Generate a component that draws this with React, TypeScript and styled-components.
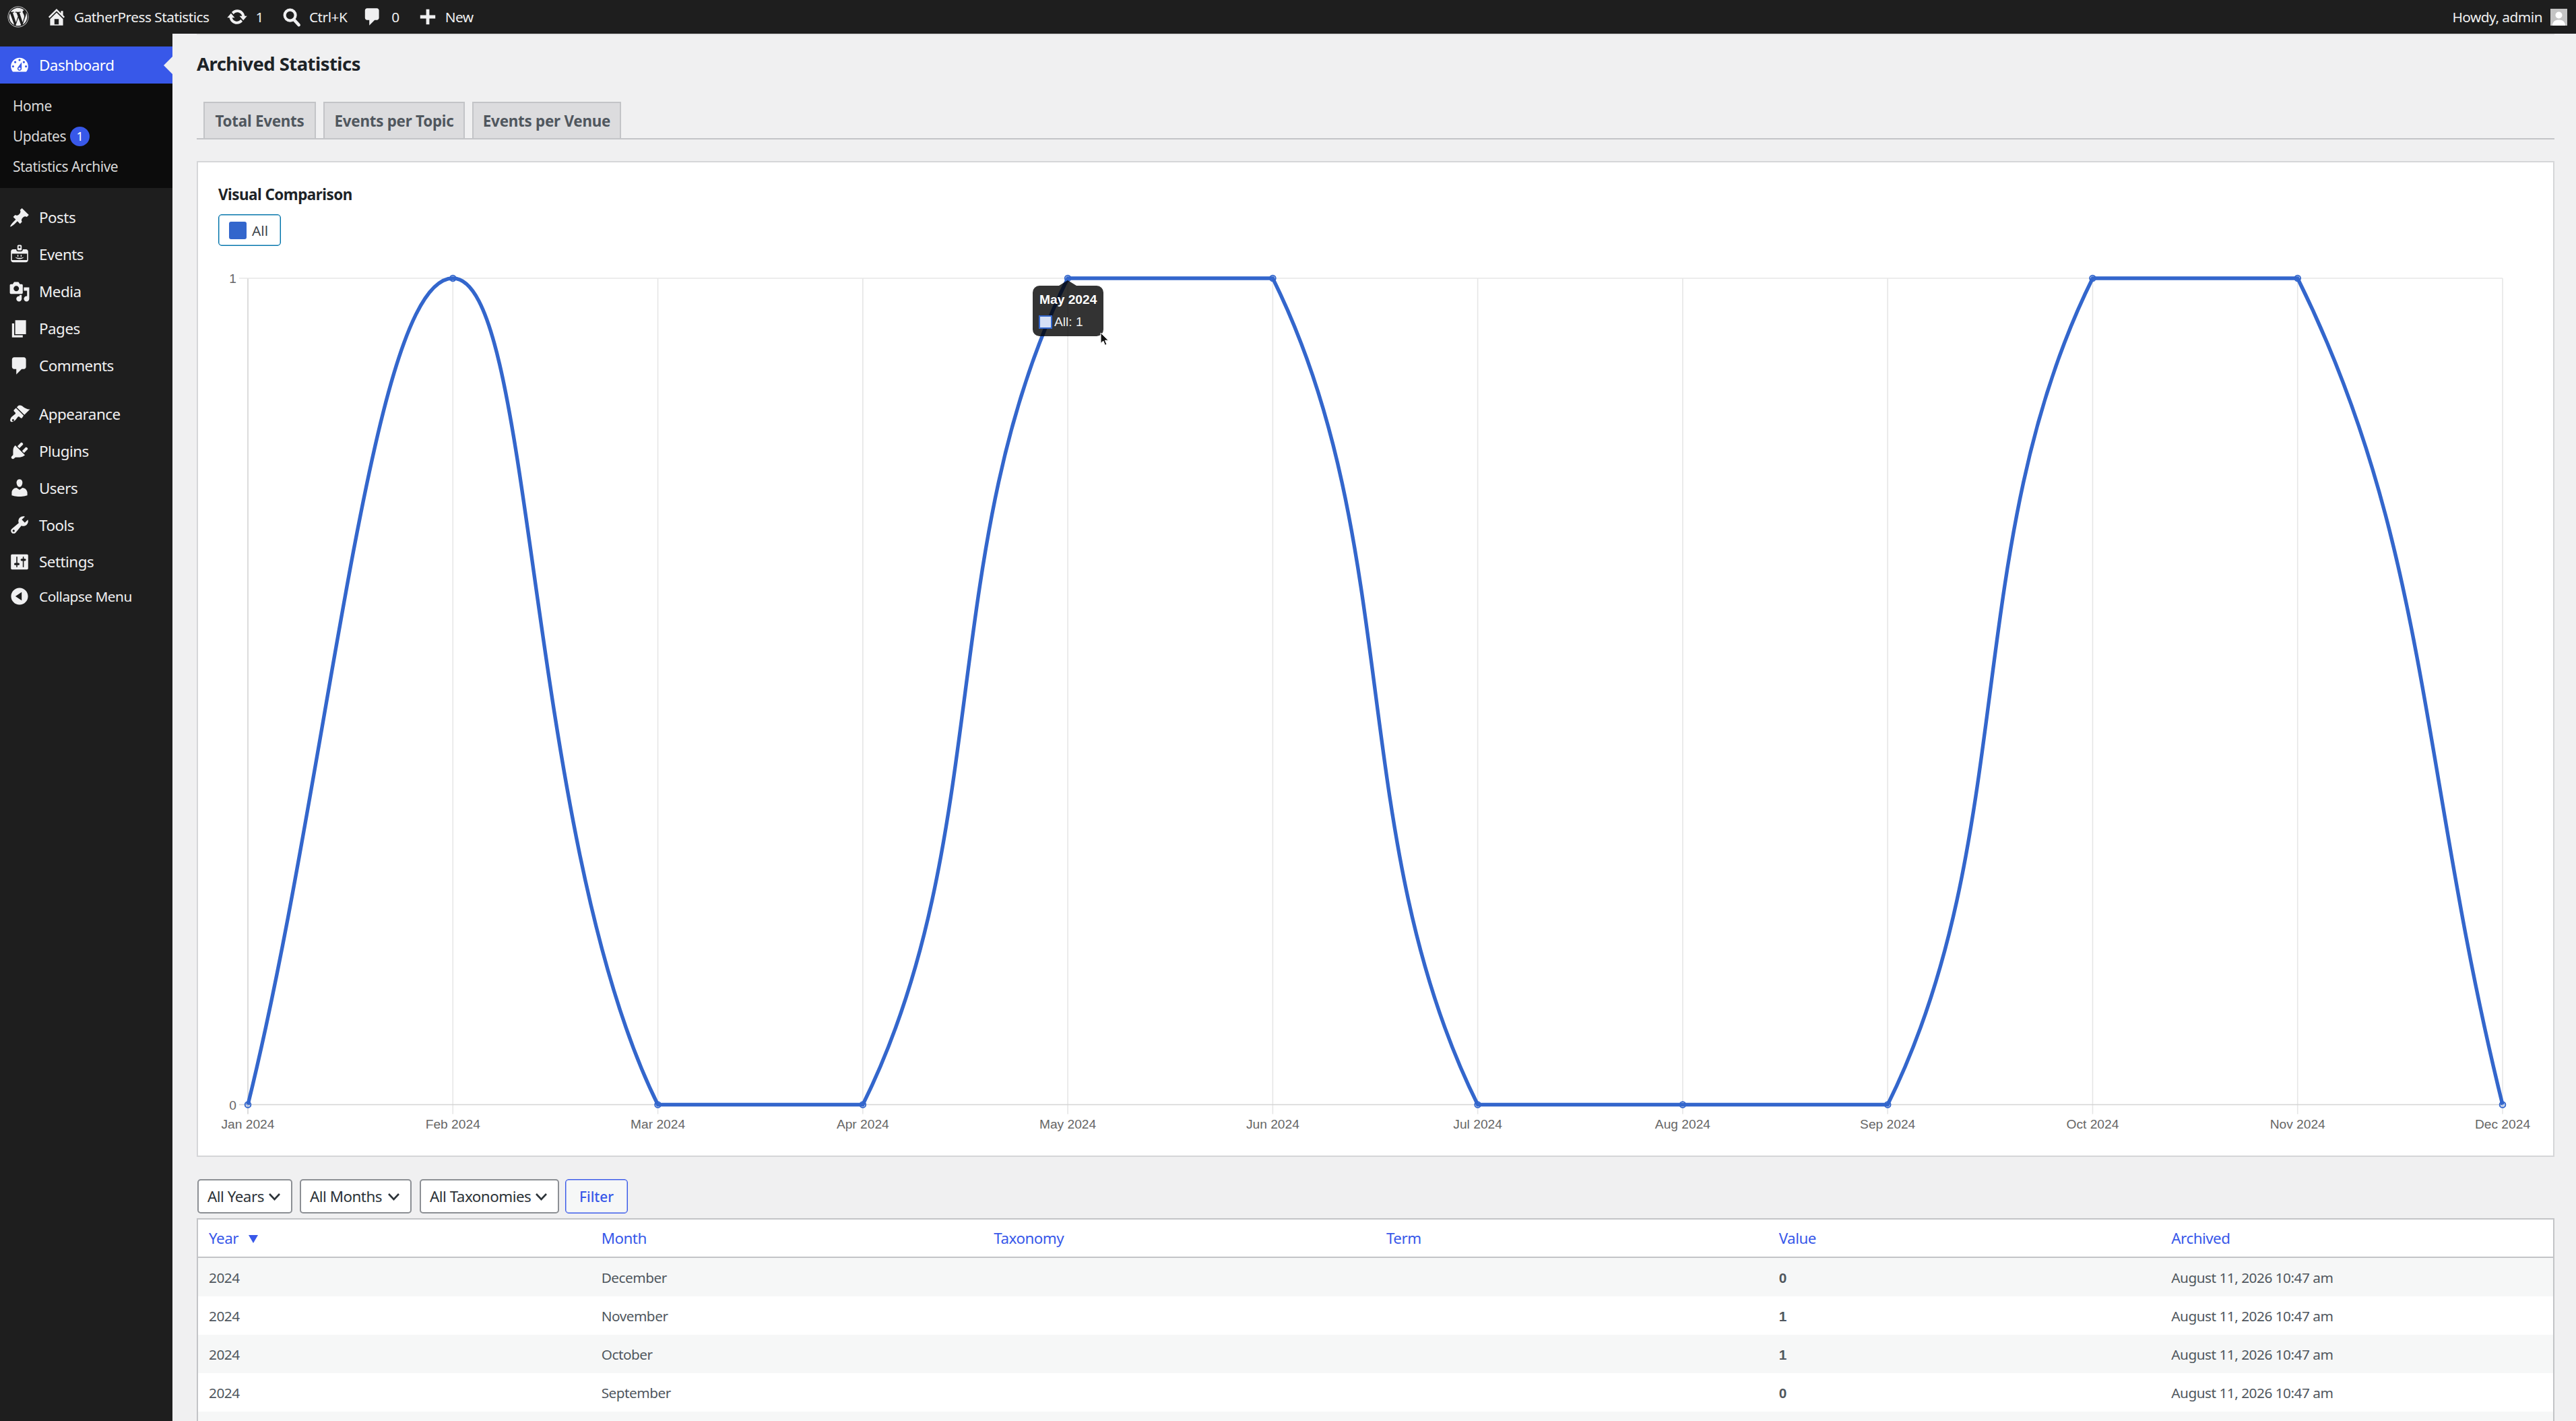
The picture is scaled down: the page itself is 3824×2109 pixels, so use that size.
import React from "react";
import styled, { createGlobalStyle } from "styled-components";
import { FaWordpress } from "react-icons/fa";

const UI = '"Noto Sans", "Open Sans", sans-serif';
const CHART = '"Liberation Sans", Arial, sans-serif';

const Global = createGlobalStyle`
  html, body { margin: 0; padding: 0; height: 100%; overflow: hidden; background: #f0f0f1; }
  #root { height: 100%; }
  * { box-sizing: border-box; }
`;

const Page = styled.div`
  display: flex; flex-direction: column; height: 2109px; overflow: hidden;
  font-family: ${UI}; font-size: 20.8px; letter-spacing: -0.5px; color: #50575e;
`;
const AdminBar = styled.header`
  display: flex; align-items: center; flex: 0 0 50px; height: 50px; background: #1e1e1e; color: #f0f0f1; padding: 0 13px 0 11px;
`;
const BarIcon = styled.svg<{ $ml?: number }>`
  width: 32px; height: 32px; flex: none; fill: #f0f0f1; margin-left: ${p => p.$ml ?? 0}px;
`;
const BarText = styled.span<{ $ml?: number }>`
  margin-left: ${p => p.$ml ?? 10}px; white-space: nowrap; line-height: 50px;
`;
const BarSpacer = styled.div`flex: 1;`;
const Avatar = styled.svg`
  width: 25px; height: 25px; margin-left: 12px; display: block;
`;
const Body = styled.div`display: flex; flex: 1; min-height: 0;`;
const Sidebar = styled.nav`
  flex: 0 0 256px; width: 256px; background: #1e1e1e; padding-top: 19px; color: #f0f0f1;
`;
const MenuRow = styled.div<{ $active?: boolean; $h?: number; $size?: number }>`
  position: relative; display: flex; align-items: center; height: ${p => p.$h ?? 54.9}px;
  font-size: ${p => p.$size ?? 22.4}px; background: ${p => p.$active ? "#3858e9" : "transparent"};
  color: ${p => p.$active ? "#fff" : "#f0f0f1"};
`;
const MenuIcon = styled.svg`
  width: 32px; height: 32px; margin-left: 13px; margin-right: 13px; flex: none; fill: currentColor;
`;
const CurrentArrow = styled.i`
  position: absolute; right: 0; top: 50%; margin-top: -13px;
  border: 13px solid transparent; border-left-width: 0; border-right: 13px solid #f0f0f1;
`;
const Submenu = styled.div`
  background: #0c0c0c; padding: 10.5px 0 9.5px 19px; margin-bottom: 16.5px;
`;
const SubRow = styled.div`
  display: flex; align-items: center; height: 45px; color: #d8d8d8; font-size: 21px;
`;
const Badge = styled.span`
  display: inline-flex; align-items: center; justify-content: center; width: 29px; height: 29px; margin-left: 6px;
  border-radius: 50%; background: #3858e9; color: #fff; font-size: 18px;
`;
const MenuGroup = styled.div`margin-bottom: 17px;`;
const Main = styled.main`
  flex: 1; min-width: 0; background: #f0f0f1; padding: 0 32px 0 36px;
`;
const TopRule = styled.div`height: 2px; background: #e2e2e3;`;
const Title = styled.h1`
  margin: 18px 0 0; height: 50px; line-height: 50px; font-size: 27.4px; font-weight: 700; color: #1d2327;
`;
const Tabs = styled.div`
  display: flex; gap: 11px; margin-top: 31px; height: 56px; padding-left: 10px; border-bottom: 2px solid #c3c4c7;
`;
const Tab = styled.div<{ $w: number }>`
  width: ${p => p.$w}px; height: 54px; display: flex; align-items: center; justify-content: center;
  background: #dcdcde; border: 2px solid #c3c4c7; border-bottom: 0; color: #50575e; font-size: 22.4px; font-weight: 700; letter-spacing: -0.25px; white-space: nowrap;
`;
const Panel = styled.section`
  margin-top: 32px; height: 1478px; background: #fff; border: 2px solid #d5d6d8; padding: 30px 30px 0;
`;
const PanelTitle = styled.h2`
  margin: 0; height: 36px; line-height: 36px; font-size: 22.4px; font-weight: 700; color: #1d2327;
`;
const LegendButton = styled.button`
  display: flex; align-items: center; gap: 8px; width: 93px; height: 47px; margin-top: 11px; padding: 0 0 0 15px;
  background: #fff; border: 1px solid #0073aa; box-shadow: inset 0 0 0 1px rgba(0, 115, 170, 0.45); border-radius: 5px;
  font: inherit; color: #3c434a; font-size: 20.8px;
`;
const Swatch = styled.i`
  width: 26px; height: 26px; border-radius: 3px; background: #3366cc; flex: none;
`;
const ChartWrap = styled.div`
  position: relative; margin-top: 27px; width: 3436px; height: 1320px;
`;
const ChartSvg = styled.svg`display: block; width: 3436px; height: 1320px;`;
const ChartLabel = styled.text`
  font-family: ${CHART}; font-size: 19.2px; letter-spacing: 0; fill: #666;
`;
const Tooltip = styled.div`
  position: absolute; left: 1209px; top: 32px; width: 105px; height: 75px; padding: 11px 10px;
  background: rgba(0, 0, 0, 0.8); border-radius: 10px; color: #fff; font-family: ${CHART}; letter-spacing: 0; font-size: 19.2px; white-space: nowrap;
  &::before {
    content: ""; position: absolute; left: 39px; top: -8px; border: 13px solid transparent; border-top: 0;
    border-bottom: 8px solid rgba(0, 0, 0, 0.8);
  }
`;
const TipTitle = styled.div`font-weight: 700; line-height: 20px;`;
const TipLine = styled.div`display: flex; align-items: center; gap: 3px; margin-top: 13px; line-height: 20px; color: #f0f0f0;`;
const TipSwatch = styled.i`
  width: 20px; height: 20px; background: #d6e0f5; border: 2px solid #3366cc; flex: none; margin-left: -1px;
`;
const Pointer = styled.svg`
  position: absolute; left: 1309px; top: 101px; width: 14px; height: 21px;
`;
const Filters = styled.form`
  display: flex; margin-top: 33px; height: 51px;
`;
const Select = styled.div<{ $w: number; $ml: number }>`
  display: flex; align-items: center; justify-content: space-between; width: ${p => p.$w}px; margin-left: ${p => p.$ml}px;
  padding: 0 15px 0 13px; background: #fff; border: 2px solid #8c8f94; border-radius: 5px; color: #2c3338; font-size: 22.4px; white-space: nowrap;
`;
const Chevron = styled.svg`width: 19px; height: 12px; flex: none;`;
const FilterButton = styled.button`
  width: 93px; margin-left: 9px; background: #f6f7f7; border: 1px solid #3858e9; box-shadow: inset 0 0 0 1px rgba(56, 88, 233, 0.45); border-radius: 5px; color: #3858e9;
  font: inherit; font-weight: 500; font-size: 20.8px;
`;
const Table = styled.table`
  display: table; width: 3500px; margin-top: 7px; table-layout: fixed; border-collapse: separate; border-spacing: 0;
  background: #fff; border: 2px solid #c3c4c7;
`;
const Th = styled.th`
  height: 57px; padding: 0 0 0 16px; text-align: left; font-weight: 400; color: #3858e9; font-size: 22.4px; border-bottom: 2px solid #c3c4c7;
`;
const SortArrow = styled.i`
  display: inline-block; margin-left: 15px; vertical-align: 1px; border: 7px solid transparent; border-top: 12px solid #3858e9; border-bottom: 0;
`;
const Row = styled.tr<{ $alt: boolean }>`background: ${p => p.$alt ? "#f6f7f7" : "#fff"};`;
const Td = styled.td`
  height: 57px; padding: 0 0 0 16px; font-size: 20.8px; color: #50575e; white-space: nowrap;
`;
const Value = styled.strong`font-family: ${CHART}; font-weight: 700; letter-spacing: 0;`;

/* --- chart geometry, in svg coordinates (page x - 324, page y - 392) --- */
const X0 = 44, XN = 3391, TOP = 21, BOT = 1247.5;
const VALUES = [0, 1, 0, 0, 1, 1, 0, 0, 0, 1, 1, 0];
const LABELS = ["Jan", "Feb", "Mar", "Apr", "May", "Jun", "Jul", "Aug", "Sep", "Oct", "Nov", "Dec"].map(m => `${m} 2024`);
const step = (XN - X0) / 11;
const PTS = VALUES.map((v, i) => ({ x: X0 + i * step, y: v ? TOP : BOT }));

function linePath(): string {
  const t = 0.4;
  const cap = (v: number, a: number, b: number) => Math.max(Math.min(v, b), a);
  const ctrl = PTS.map((c, i) => {
    const p = PTS[i - 1] ?? c;
    const n = PTS[i + 1] ?? c;
    const d01 = Math.hypot(c.x - p.x, c.y - p.y);
    const d12 = Math.hypot(n.x - c.x, n.y - c.y);
    const s = d01 + d12 || 1;
    const fa = (t * d01) / s, fb = (t * d12) / s;
    return {
      c1x: cap(c.x - fa * (n.x - p.x), X0, XN), c1y: cap(c.y - fa * (n.y - p.y), TOP, BOT),
      c2x: cap(c.x + fb * (n.x - p.x), X0, XN), c2y: cap(c.y + fb * (n.y - p.y), TOP, BOT),
    };
  });
  let d = `M${PTS[0].x} ${PTS[0].y}`;
  for (let i = 1; i < PTS.length; i++) {
    d += `C${ctrl[i - 1].c2x} ${ctrl[i - 1].c2y} ${ctrl[i].c1x} ${ctrl[i].c1y} ${PTS[i].x} ${PTS[i].y}`;
  }
  return d;
}

const ICONS = {
  home: "M16 8.5l1.53 1.53-1.06 1.06L10 4.62l-6.47 6.47-1.06-1.06L10 2.5l4 4v-2h2v4zm-6-2.46l6 5.99V18H4v-5.97zM12 17v-5H8v5h4z",
  update: "M10.2 3.28c3.53 0 6.43 2.61 6.92 6h2.08l-3.5 4-3.5-4h2.32c-.45-1.97-2.21-3.44-4.32-3.44-1.45 0-2.73.71-3.54 1.78L4.95 5.66C6.23 4.2 8.11 3.28 10.2 3.28zm-.4 13.44c-3.52 0-6.43-2.61-6.92-6H.8l3.5-4c1.17 1.33 2.33 2.67 3.5 4H5.48c.45 1.97 2.21 3.44 4.32 3.44 1.45 0 2.73-.71 3.54-1.78l1.71 1.95c-1.28 1.46-3.15 2.39-5.25 2.39z",
  comment: "M5 2h9c1.1 0 2 .9 2 2v7c0 1.1-.9 2-2 2h-2l-5 5v-5H5c-1.1 0-2-.9-2-2V4c0-1.1.9-2 2-2z",
  plus: "M17 8.5v3h-5.5V17h-3v-5.5H3v-3h5.5V3h3v5.5z",
  dashboard: "M3.76 16h12.48c1.1-1.37 1.76-3.11 1.76-5 0-4.42-3.58-8-8-8s-8 3.58-8 8c0 1.89.66 3.63 1.76 5zM10 4c.55 0 1 .45 1 1s-.45 1-1 1-1-.45-1-1 .45-1 1-1zM6 6c.55 0 1 .45 1 1s-.45 1-1 1-1-.45-1-1 .45-1 1-1zm8 0c.55 0 1 .45 1 1s-.45 1-1 1-1-.45-1-1 .45-1 1-1zm-5.37 5.55L12 7v6c0 1.1-.9 2-2 2s-2-.9-2-2c0-.57.24-1.08.63-1.45zM4 10c.55 0 1 .45 1 1s-.45 1-1 1-1-.45-1-1 .45-1 1-1zm12 0c.55 0 1 .45 1 1s-.45 1-1 1-1-.45-1-1 .45-1 1-1zm-5 3c0-.55-.45-1-1-1s-1 .45-1 1 .45 1 1 1 1-.45 1-1z",
  posts: "M10.44 3.02l1.82-1.82 6.36 6.35-1.83 1.82c-1.05-.68-2.48-.57-3.41.36l-.75.75c-.92.93-1.04 2.35-.35 3.41l-1.83 1.82-2.41-2.41-2.8 2.79c-.42.42-3.38 2.71-3.8 2.29s1.86-3.39 2.28-3.81l2.79-2.79L4.1 9.36l1.83-1.82c1.05.69 2.48.57 3.4-.36l.75-.75c.93-.92 1.05-2.35.36-3.41z",
  events: "M12 5V2c0-.55-.45-1-1-1H9c-.55 0-1 .45-1 1v3c0 .55.45 1 1 1h2c.55 0 1-.45 1-1zm-2-3c.55 0 1 .45 1 1s-.45 1-1 1-1-.45-1-1 .45-1 1-1zm8 13V7c0-1.1-.9-2-2-2h-3v.33C13 6.25 12.25 7 11.33 7H8.67C7.75 7 7 6.25 7 5.33V5H4c-1.1 0-2 .9-2 2v8c0 1.1.9 2 2 2h12c1.1 0 2-.9 2-2zm-1-6v6H3V9h14zm-8 2c0-.55-.22-1-.5-1s-.5.45-.5 1 .22 1 .5 1 .5-.45.5-1zm3 0c0-.55-.22-1-.5-1s-.5.45-.5 1 .22 1 .5 1 .5-.45.5-1zm-5.96 1.21c.92.48 2.34.79 3.96.79s3.04-.31 3.96-.79c-.21 1-1.89 1.79-3.96 1.79s-3.75-.79-3.96-1.79z",
  media: "M13 11V4c0-.55-.45-1-1-1h-1.67L9 1H5L3.67 3H2c-.55 0-1 .45-1 1v7c0 .55.45 1 1 1h10c.55 0 1-.45 1-1zM7 4.5c1.38 0 2.5 1.12 2.5 2.5S8.38 9.5 7 9.5 4.5 8.38 4.5 7 5.62 4.5 7 4.5zM14 6h5v10.5c0 1.38-1.12 2.5-2.5 2.5S14 17.88 14 16.5s1.12-2.5 2.5-2.5c.17 0 .34.02.5.05V9h-3V6zm-4 8.05V13h2v3.5c0 1.38-1.12 2.5-2.5 2.5S7 17.88 7 16.5 8.12 14 9.5 14c.17 0 .34.02.5.05z",
  pages: "M6 15V2h10v13H6zm-1 1h8v2H3V5h2v11z",
  comments: "M5 2h9c1.1 0 2 .9 2 2v7c0 1.1-.9 2-2 2h-2l-5 5v-5H5c-1.1 0-2-.9-2-2V4c0-1.1.9-2 2-2z",
  appearance: "M14.48 11.06L7.41 3.99l1.5-1.5c.5-.56 2.3-.47 3.51.32 1.21.8 1.43 1.28 2.91 2.1 1.18.64 2.45 1.26 4.45.85zm-.71.71L6.7 4.7 4.93 6.47c-.39.39-.39 1.02 0 1.41l1.06 1.06c.39.39.39 1.03 0 1.42-.6.6-1.43 1.11-2.21 1.69-.35.26-.7.53-1.01.84-.95.95-2.05 3.31-1.01 4.34s3.23-.16 4.19-1.11c.31-.31.58-.66.84-1.01.58-.78 1.09-1.61 1.69-2.21.39-.39 1.03-.39 1.42 0l1.06 1.06c.39.39 1.02.39 1.41 0zM3.3 16.7a.95.95 0 1 1 1.35-1.35.95.95 0 0 1-1.35 1.35z",
  plugins: "M13.11 4.36L9.87 7.6 8 5.73l3.24-3.24c.35-.34 1.05-.2 1.56.32.52.51.66 1.21.31 1.55zm-8 1.77l.91-1.12 9.01 9.01-1.19.84c-.71.71-2.63 1.16-3.82 1.16H6.14L4.9 17.26c-.59.59-1.54.59-2.12 0-.59-.58-.59-1.53 0-2.12l1.24-1.24v-3.88c0-1.13.4-3.19 1.09-3.89zm7.26 3.97l3.24-3.24c.34-.35 1.04-.21 1.55.31.52.51.66 1.21.31 1.55l-3.24 3.25z",
  users: "M10 9.25c-2.27 0-2.73-3.44-2.73-3.44C7 4.02 7.82 2 9.97 2c2.16 0 2.98 2.02 2.71 3.81 0 0-.41 3.44-2.68 3.44zm0 2.57L12.72 10c2.39 0 4.52 2.33 4.52 4.53v2.49s-3.65 1.13-7.24 1.13c-3.65 0-7.24-1.13-7.24-1.13v-2.49c0-2.25 1.94-4.48 4.47-4.48z",
  tools: "M16.68 9.77c-1.34 1.34-3.3 1.67-4.95.99l-5.41 6.52c-.99.99-2.59.99-3.58 0s-.99-2.59 0-3.57l6.52-5.42c-.68-1.65-.35-3.61.99-4.95 1.28-1.28 3.12-1.62 4.72-1.06l-2.89 2.89 2.82 2.82 2.86-2.87c.53 1.58.18 3.39-1.08 4.65zM3.81 16.21c.4.39 1.04.39 1.43 0 .4-.4.4-1.04 0-1.43-.39-.4-1.03-.4-1.43 0-.39.39-.39 1.03 0 1.43z",
  settings: "M18 16V4c0-.55-.45-1-1-1H3c-.55 0-1 .45-1 1v12c0 .55.45 1 1 1h14c.55 0 1-.45 1-1zM8 11h1c.55 0 1 .45 1 1s-.45 1-1 1H8v1.5c0 .28-.22.5-.5.5s-.5-.22-.5-.5V13H6c-.55 0-1-.45-1-1s.45-1 1-1h1V5.5c0-.28.22-.5.5-.5s.5.22.5.5V11zm5-2h-1c-.55 0-1-.45-1-1s.45-1 1-1h1V5.5c0-.28.22-.5.5-.5s.5.22.5.5V7h1c.55 0 1 .45 1 1s-.45 1-1 1h-1v5.5c0 .28-.22.5-.5.5s-.5-.22-.5-.5V9z",
  collapse: "M10 2.16c4.33 0 7.84 3.51 7.84 7.84s-3.51 7.84-7.84 7.84S2.16 14.33 2.16 10 5.71 2.16 10 2.16zm2 11.72V6.12L6.18 9.97z",
};

function SideIcon({ name }: { name: keyof typeof ICONS }) {
  return <MenuIcon viewBox="0 0 20 20"><path d={ICONS[name]} /></MenuIcon>;
}

const MONTHS = ["December", "November", "October", "September"];
const ROW_VALUES = [0, 1, 1, 0];
const HEADERS = ["Month", "Taxonomy", "Term", "Value", "Archived"];

export default function App() {
  return (
    <Page>
      <Global />
      <AdminBar>
        <FaWordpress size={32} color="#f0f0f1" />
        <BarIcon viewBox="0 0 20 20" $ml={25}><path d={ICONS.home} /></BarIcon>
        <BarText>GatherPress Statistics</BarText>
        <BarIcon viewBox="0 0 20 20" $ml={25}><path d={ICONS.update} /></BarIcon>
        <BarText $ml={12}>1</BarText>
        <BarIcon viewBox="0 0 20 20" $ml={26}>
          <circle cx="8.5" cy="8.5" r="5" fill="none" stroke="#f0f0f1" strokeWidth="2.6" />
          <path d="M12 12.5l4.6 5" fill="none" stroke="#f0f0f1" strokeWidth="3" strokeLinecap="round" />
        </BarIcon>
        <BarText>Ctrl+K</BarText>
        <BarIcon viewBox="0 0 20 20" $ml={22}><path d={ICONS.comment} /></BarIcon>
        <BarText $ml={12}>0</BarText>
        <BarIcon viewBox="0 0 20 20" $ml={26}><path d={ICONS.plus} /></BarIcon>
        <BarText>New</BarText>
        <BarSpacer />
        <BarText>Howdy, admin</BarText>
        <Avatar viewBox="0 0 25 25">
          <rect width="25" height="25" fill="#c4c4c4" />
          <circle cx="12.5" cy="9.5" r="5" fill="#fff" />
          <path d="M3 25c0-6 4-8.5 9.5-8.5S22 19 22 25z" fill="#fff" />
        </Avatar>
      </AdminBar>
      <Body>
        <Sidebar>
          <MenuRow $active $h={55}>
            <SideIcon name="dashboard" />Dashboard<CurrentArrow />
          </MenuRow>
          <Submenu>
            <SubRow>Home</SubRow>
            <SubRow>Updates<Badge>1</Badge></SubRow>
            <SubRow>Statistics Archive</SubRow>
          </Submenu>
          <MenuGroup>
            <MenuRow><SideIcon name="posts" />Posts</MenuRow>
            <MenuRow><SideIcon name="events" />Events</MenuRow>
            <MenuRow><SideIcon name="media" />Media</MenuRow>
            <MenuRow><SideIcon name="pages" />Pages</MenuRow>
            <MenuRow><SideIcon name="comments" />Comments</MenuRow>
          </MenuGroup>
          <div>
            <MenuRow><SideIcon name="appearance" />Appearance</MenuRow>
            <MenuRow><SideIcon name="plugins" />Plugins</MenuRow>
            <MenuRow><SideIcon name="users" />Users</MenuRow>
            <MenuRow><SideIcon name="tools" />Tools</MenuRow>
            <MenuRow><SideIcon name="settings" />Settings</MenuRow>
            <MenuRow $h={47} $size={20.8}><SideIcon name="collapse" />Collapse Menu</MenuRow>
          </div>
        </Sidebar>
        <Main>
          <TopRule />
          <Title>Archived Statistics</Title>
          <Tabs>
            <Tab $w={167}>Total Events</Tab>
            <Tab $w={210}>Events per Topic</Tab>
            <Tab $w={221}>Events per Venue</Tab>
          </Tabs>
          <Panel>
            <PanelTitle>Visual Comparison</PanelTitle>
            <LegendButton type="button"><Swatch />All</LegendButton>
            <ChartWrap>
              <ChartSvg viewBox="0 0 3436 1320">
                {PTS.map((p, i) => (
                  <line key={i} x1={p.x} x2={p.x} y1={TOP} y2={BOT + 14} stroke={i === 0 ? "#d4d4d4" : "#e6e6e6"} strokeWidth="1.6" />
                ))}
                <line x1={X0 - 13} x2={XN} y1={TOP} y2={TOP} stroke="#e6e6e6" strokeWidth="1.6" />
                <line x1={X0 - 13} x2={XN} y1={BOT} y2={BOT} stroke="#d4d4d4" strokeWidth="1.6" />
                <ChartLabel x={X0 - 17} y={TOP + 7} textAnchor="end">1</ChartLabel>
                <ChartLabel x={X0 - 17} y={BOT + 7} textAnchor="end">0</ChartLabel>
                {PTS.map((p, i) => (
                  <ChartLabel key={i} x={p.x} y={BOT + 35} textAnchor="middle">{LABELS[i]}</ChartLabel>
                ))}
                <path d={linePath()} fill="none" stroke="#3366cc" strokeWidth="5.4" />
                {PTS.map((p, i) => (
                  <circle key={i} cx={p.x} cy={p.y} r="4.4" fill="rgba(51,102,204,0.25)" stroke="#3366cc" strokeWidth="1.8" />
                ))}
              </ChartSvg>
              <Tooltip>
                <TipTitle>May 2024</TipTitle>
                <TipLine><TipSwatch />All: 1</TipLine>
              </Tooltip>
              <Pointer viewBox="0 0 14 21">
                <path d="M1 1v15.5l3.8-3.4 2.6 6.2 2.6-1.1-2.6-6h5z" fill="#111" stroke="#fff" strokeWidth="1" />
              </Pointer>
            </ChartWrap>
          </Panel>
          <Filters>
            <Select $w={141} $ml={1}>All Years<Chevron viewBox="0 0 19 12"><path d="M2 2l7.5 8L17 2" fill="none" stroke="#2c3338" strokeWidth="2.6" /></Chevron></Select>
            <Select $w={166} $ml={11}>All Months<Chevron viewBox="0 0 19 12"><path d="M2 2l7.5 8L17 2" fill="none" stroke="#2c3338" strokeWidth="2.6" /></Chevron></Select>
            <Select $w={207} $ml={12}>All Taxonomies<Chevron viewBox="0 0 19 12"><path d="M2 2l7.5 8L17 2" fill="none" stroke="#2c3338" strokeWidth="2.6" /></Chevron></Select>
            <FilterButton type="button">Filter</FilterButton>
          </Filters>
          <Table>
            <thead>
              <tr>
                <Th>Year<SortArrow /></Th>
                {HEADERS.map(h => <Th key={h}>{h}</Th>)}
              </tr>
            </thead>
            <tbody>
              {MONTHS.map((m, i) => (
                <Row key={m} $alt={i % 2 === 0}>
                  <Td>2024</Td>
                  <Td>{m}</Td>
                  <Td />
                  <Td />
                  <Td><Value>{ROW_VALUES[i]}</Value></Td>
                  <Td>August 11, 2026 10:47 am</Td>
                </Row>
              ))}
              <Row $alt={true}>
                <Td /><Td /><Td /><Td /><Td /><Td />
              </Row>
            </tbody>
          </Table>
        </Main>
      </Body>
    </Page>
  );
}
